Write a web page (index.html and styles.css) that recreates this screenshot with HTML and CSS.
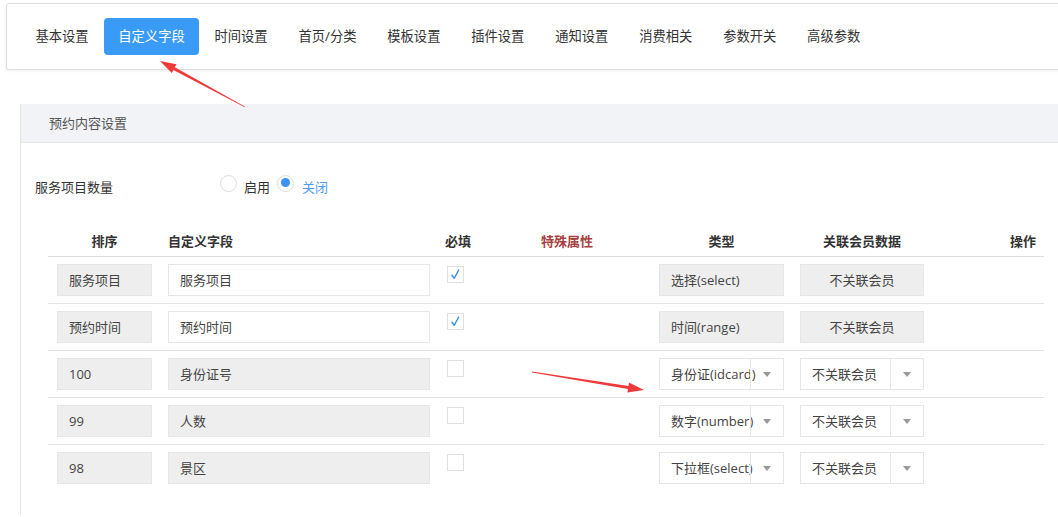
FILE: index.html
```html
<!DOCTYPE html>
<html lang="zh-CN">
<head>
<meta charset="utf-8">
<title>自定义字段</title>
<link rel="stylesheet" href="styles.css">
</head>
<body>
<nav class="tabs">
  <a class="tab">基本设置</a>
  <a class="tab active">自定义字段</a>
  <a class="tab">时间设置</a>
  <a class="tab">首页/分类</a>
  <a class="tab">模板设置</a>
  <a class="tab">插件设置</a>
  <a class="tab">通知设置</a>
  <a class="tab">消费相关</a>
  <a class="tab">参数开关</a>
  <a class="tab">高级参数</a>
</nav>

<section class="panel">
  <div class="panel-head">预约内容设置</div>
  <div class="panel-body">
    <div class="form-row">
      <div class="form-label">服务项目数量</div>
      <div class="radio-group">
        <span class="radio"></span><span class="radio-text">启用</span>
        <span class="radio checked"></span><span class="radio-text on">关闭</span>
      </div>
    </div>

    <div class="table">
      <div class="trow thead">
        <div class="c1 th">排序</div>
        <div class="c2 th left">自定义字段</div>
        <div class="c3 th left">必填</div>
        <div class="c4 th left special">特殊属性</div>
        <div class="c5 th">类型</div>
        <div class="c6 th">关联会员数据</div>
        <div class="c7 th right">操作</div>
      </div>

      <div class="trow">
        <div class="c1"><div class="field gray">服务项目</div></div>
        <div class="c2"><div class="field">服务项目</div></div>
        <div class="c3"><span class="check"><svg viewBox="0 0 16 16" width="15" height="15"><path d="M4.2 8.8 L6.7 12 L11.4 3.2" fill="none" stroke="#3a8af2" stroke-width="1.5" stroke-linecap="round" stroke-linejoin="round"/></svg></span></div>
        <div class="c4"></div>
        <div class="c5"><div class="field gray w125">选择(select)</div></div>
        <div class="c6"><div class="field gray w124 center">不关联会员</div></div>
        <div class="c7"></div>
      </div>

      <div class="trow">
        <div class="c1"><div class="field gray">预约时间</div></div>
        <div class="c2"><div class="field">预约时间</div></div>
        <div class="c3"><span class="check"><svg viewBox="0 0 16 16" width="15" height="15"><path d="M4.2 8.8 L6.7 12 L11.4 3.2" fill="none" stroke="#3a8af2" stroke-width="1.5" stroke-linecap="round" stroke-linejoin="round"/></svg></span></div>
        <div class="c4"></div>
        <div class="c5"><div class="field gray w125">时间(range)</div></div>
        <div class="c6"><div class="field gray w124 center">不关联会员</div></div>
        <div class="c7"></div>
      </div>

      <div class="trow">
        <div class="c1"><div class="field gray">100</div></div>
        <div class="c2"><div class="field gray">身份证号</div></div>
        <div class="c3"><span class="check"></span></div>
        <div class="c4"></div>
        <div class="c5"><div class="sel w125"><span class="sel-text">身份证(idcard)</span><span class="sel-btn"><i class="caret"></i></span></div></div>
        <div class="c6"><div class="sel w124"><span class="sel-text">不关联会员</span><span class="sel-btn"><i class="caret"></i></span></div></div>
        <div class="c7"></div>
      </div>

      <div class="trow">
        <div class="c1"><div class="field gray">99</div></div>
        <div class="c2"><div class="field gray">人数</div></div>
        <div class="c3"><span class="check"></span></div>
        <div class="c4"></div>
        <div class="c5"><div class="sel w125"><span class="sel-text">数字(number)</span><span class="sel-btn"><i class="caret"></i></span></div></div>
        <div class="c6"><div class="sel w124"><span class="sel-text">不关联会员</span><span class="sel-btn"><i class="caret"></i></span></div></div>
        <div class="c7"></div>
      </div>

      <div class="trow">
        <div class="c1"><div class="field gray">98</div></div>
        <div class="c2"><div class="field gray">景区</div></div>
        <div class="c3"><span class="check"></span></div>
        <div class="c4"></div>
        <div class="c5"><div class="sel w125"><span class="sel-text">下拉框(select)</span><span class="sel-btn"><i class="caret"></i></span></div></div>
        <div class="c6"><div class="sel w124"><span class="sel-text">不关联会员</span><span class="sel-btn"><i class="caret"></i></span></div></div>
        <div class="c7"></div>
      </div>
    </div>
  </div>
</section>

<svg class="annotations" width="1058" height="517" viewBox="0 0 1058 517" aria-hidden="true">
  <polygon fill="#f03a3a" points="245.19,106.65 174.81,67.28 176.48,64.22 160,61 171.72,73.0 173.39,69.92 244.81,107.35"/>
  <polygon fill="#f03a3a" points="531.92,372.49 627.96,388.94 627.41,392.40 644,390 628.99,382.52 628.44,385.98 532.08,371.51"/>
</svg>
</body>
</html>
```

FILE: styles.css
```css
html, body {
  margin: 0;
  padding: 0;
  overflow: hidden;
  background: #fff;
}

body {
  position: relative;
  width: 1058px;
  height: 517px;
  font-family: "Open Sans", "Noto Sans CJK SC", sans-serif;
  font-size: 13px;
  color: #333;
}

/* ---------- top tabs ---------- */
.tabs {
  display: flex;
  margin: 3px -12px 0 6px;
  padding: 14px 13px 14px;
  border: 1px solid #dedede;
  border-radius: 3px;
  box-shadow: 0 1px 3px rgba(0, 0, 0, 0.07);
  background: #fff;
}

.tab {
  height: 37px;
  line-height: 37px;
  padding: 0 15.4px;
  font-size: 13.3px;
  color: #333;
  border-radius: 4px;
  white-space: nowrap;
}

.tab.active {
  background: #3a9bf6;
  color: #fff;
  padding: 0 14.3px;
}

/* ---------- panel ---------- */
.panel {
  margin: 34px -12px 0 20px;
  border-left: 1px solid #e6e6e6;
}

.panel-head {
  height: 38px;
  line-height: 38px;
  padding-left: 28px;
  background: #f2f3f7;
  border-bottom: 1px solid #e6e6e6;
  color: #555;
  font-size: 13px;
}

.panel-body {
  padding: 34px 0 24px 14px;
}

.form-row {
  display: flex;
  align-items: flex-start;
  height: 20px;
}

.form-label {
  width: 185px;
  line-height: 20px;
  color: #333;
}

.radio-group {
  display: flex;
  align-items: flex-start;
}

.radio {
  width: 17px;
  height: 17px;
  box-sizing: border-box;
  border: 1px solid #dcdcdc;
  border-radius: 50%;
  background: #fff;
  margin-top: -2px;
  display: flex;
  align-items: center;
  justify-content: center;
}

.radio.checked::after {
  content: "";
  width: 9px;
  height: 9px;
  border-radius: 50%;
  background: #3a93f5;
  margin-top: -2px;
}

.radio-text {
  line-height: 20px;
  margin: 0 7px 0 7px;
  color: #333;
}

.radio-text.on {
  color: #4a9cf2;
  margin-left: 8px;
}

/* ---------- table ---------- */
.table {
  margin: 29px 0 0 13px;
  width: 996px;
}

.trow {
  display: grid;
  grid-template-columns: 112px 278px 82px 131px 141px 140px 112px;
  border-bottom: 1px solid #e3e3e3;
}

.trow:last-child {
  border-bottom: none;
}

.thead {
  height: 30px;
  border-bottom: 1px solid #dcdcdc;
}

.th {
  line-height: 30px;
  font-weight: 700;
  color: #333;
  text-align: center;
  white-space: nowrap;
}

.th.left { text-align: left; }
.th.right { text-align: right; padding-right: 8px; }
.th.special { color: #a9403f; padding-left: 21px; }

.trow:not(.thead) > div {
  padding-top: 7px;
  padding-bottom: 7px;
}

.c1 { padding-left: 9px; padding-right: 8px; }
.c2 { padding-left: 8px; }
.c3 { padding-left: 9px; }
.c3.th { padding-left: 7px; }
.c5, .c6 { padding-left: 8px; padding-right: 8px; }

.field {
  box-sizing: border-box;
  height: 32px;
  line-height: 30px;
  border: 1px solid #e6e6e6;
  background: #fff;
  padding-left: 11px;
  color: #444;
  white-space: nowrap;
  width: 262px;
}

.c1 .field { width: 95px; }

.field.gray {
  background: #eeeeee;
  border-color: #e6e6e6;
}

.field.center {
  text-align: center;
  padding-left: 0;
}

.w125 { width: 125px !important; }
.w124 { width: 124px !important; }

.check {
  display: flex;
  align-items: center;
  justify-content: center;
  width: 17px;
  height: 17px;
  box-sizing: border-box;
  border: 1px solid #e0e0e0;
  background: #fff;
  margin-top: 2px;
}

.sel {
  display: flex;
  box-sizing: border-box;
  height: 32px;
  border: 1px solid #e6e6e6;
  background: #fff;
  color: #444;
}

.sel-text {
  flex: 1;
  min-width: 0;
  padding-left: 11px;
  line-height: 30px;
  white-space: nowrap;
  overflow: visible;
}

.sel-btn {
  flex: 0 0 32px;
  border-left: 1px solid #e6e6e6;
  display: flex;
  align-items: center;
  justify-content: center;
}

.caret {
  width: 0;
  height: 0;
  border-top: 5px solid #999;
  border-left: 4.5px solid transparent;
  border-right: 4.5px solid transparent;
}

/* ---------- annotation arrows (overlay) ---------- */
.annotations {
  position: absolute;
  left: 0;
  top: 0;
  pointer-events: none;
}
```
